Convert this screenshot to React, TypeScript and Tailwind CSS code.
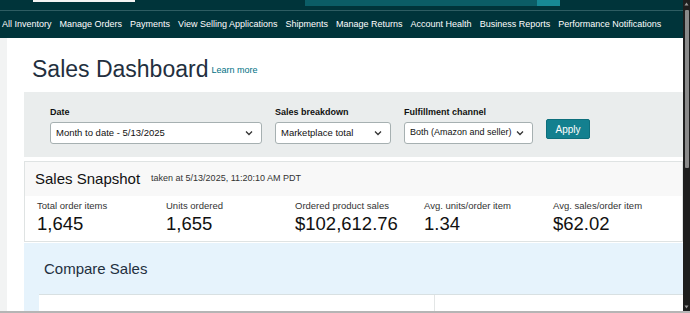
import React from "react";

const navItems = [
  "All Inventory",
  "Manage Orders",
  "Payments",
  "View Selling Applications",
  "Shipments",
  "Manage Returns",
  "Account Health",
  "Business Reports",
  "Performance Notifications",
];

const metrics = [
  { label: "Total order items", value: "1,645" },
  { label: "Units ordered", value: "1,655" },
  { label: "Ordered product sales", value: "$102,612.76" },
  { label: "Avg. units/order item", value: "1.34" },
  { label: "Avg. sales/order item", value: "$62.02" },
];

const Chevron = () => (
  <svg width="8" height="6" viewBox="0 0 8 6" className="shrink-0">
    <path d="M1 1.5 L4 4.5 L7 1.5" fill="none" stroke="#333" strokeWidth="1.3" />
  </svg>
);

const Select = ({ value, width, size }: { value: string; width: string; size: string }) => (
  <div
    className={`${width} h-[22px] flex items-center justify-between pl-[5px] pr-[8px] bg-white border border-[#a6b0b1] rounded-[3px] ${size} text-[#111] whitespace-nowrap`}
  >
    <span>{value}</span>
    <Chevron />
  </div>
);

const Field = ({
  label,
  value,
  width,
  size = "text-[9.5px]",
}: {
  label: string;
  value: string;
  width: string;
  size?: string;
}) => (
  <div className="flex flex-col gap-[4px]">
    <span className="text-[9px] font-bold text-[#111] leading-[12px]">{label}</span>
    <Select value={value} width={width} size={size} />
  </div>
);

export default function App() {
  return (
    <div
      className="w-[690px] h-[313px] flex overflow-hidden bg-white border-b-[2px] border-[#b5b5b5]"
      style={{ fontFamily: '"Liberation Sans", Arial, sans-serif' }}
    >
      <div className="flex-1 flex flex-col min-w-0">
        {/* header */}
        <div className="h-[10px] bg-[#00343a] flex items-start">
          <div className="ml-[33px] w-[102px] h-[2px] bg-[#f4f4f4]" />
          <div className="ml-[170px] w-[232px] h-[6px] bg-[#0b5d66]" />
          <div className="w-[23px] h-[6px] bg-[#178995]" />
        </div>
        <div className="h-px bg-[#2e5d62]" />
        <nav className="h-[27px] bg-[#00343a] flex items-center gap-[8px] pl-[2px] text-[9px] text-white whitespace-nowrap">
          {navItems.map((n) => (
            <span key={n}>{n}</span>
          ))}
        </nav>

        {/* body */}
        <div className="flex-1 flex min-h-0">
          <div className="w-[8px] bg-[#f2f3f3]" />
          <div className="flex-1 pl-[17px] flex flex-col">
            <div className="h-[54px] flex items-end pl-[8px] pb-[11px] gap-[3px]">
              <h1 className="text-[23px] leading-none text-[#232f3e]">Sales Dashboard</h1>
              <a className="text-[9px] text-[#007185] mb-[4px]">Learn more</a>
            </div>

            {/* filters */}
            <div className="h-[65px] bg-[#eaeded] flex items-start pt-[14px] pl-[26px] gap-[13px]">
              <Field label="Date" value="Month to date - 5/13/2025" width="w-[212px]" />
              <Field label="Sales breakdown" value="Marketplace total" width="w-[116px]" />
              <Field
                label="Fulfillment channel"
                value="Both (Amazon and seller)"
                width="w-[129px]"
                size="text-[9px]"
              />
              <button className="mt-[13px] w-[44px] h-[20px] bg-[#13808f] border border-[#0d6f7c] rounded-[2px] text-white text-[10px]">
                Apply
              </button>
            </div>

            {/* snapshot */}
            <div className="mt-[4px] border border-[#dfe3e3] flex flex-col">
              <div className="h-[34px] bg-[#f8f8f8] flex items-center pl-[10px] gap-[11px]">
                <span className="text-[15px] text-[#111]">Sales Snapshot</span>
                <span className="text-[9px] text-[#333]">taken at 5/13/2025, 11:20:10 AM PDT</span>
              </div>
              <div className="h-[45px] flex pl-[12px] pt-[4px]">
                {metrics.map((m) => (
                  <div key={m.label} className="w-[129px] flex flex-col">
                    <span className="text-[9.5px] text-[#333] leading-[12px]">{m.label}</span>
                    <span className="text-[18.5px] text-[#111] leading-[24px]">{m.value}</span>
                  </div>
                ))}
              </div>
            </div>

            {/* compare */}
            <div className="mt-px flex-1 bg-[#e6f3fc] flex flex-col">
              <div className="h-[51px] flex items-center pl-[20px] pt-[2px]">
                <span className="text-[15px] text-[#232f3e]">Compare Sales</span>
              </div>
              <div className="flex-1 ml-[15px] bg-white border-t border-[#d8e0e2] flex">
                <div className="w-[396px] border-r border-[#e3e6e6]" />
              </div>
            </div>
          </div>
        </div>
      </div>

      {/* scrollbar */}
      <div className="w-[7px] bg-[#1e1e1e] flex flex-col items-center justify-between py-[2px]">
        <svg width="5" height="4" viewBox="0 0 5 4">
          <path d="M2.5 0.5 L4.5 3.5 L0.5 3.5 Z" fill="#9a9a9a" />
        </svg>
        <div className="w-[4px] h-[158px] bg-[#8a8a8a] rounded-[1px] mb-auto mt-[4px]" />
        <svg width="5" height="4" viewBox="0 0 5 4">
          <path d="M0.5 0.5 L4.5 0.5 L2.5 3.5 Z" fill="#9a9a9a" />
        </svg>
      </div>
    </div>
  );
}
